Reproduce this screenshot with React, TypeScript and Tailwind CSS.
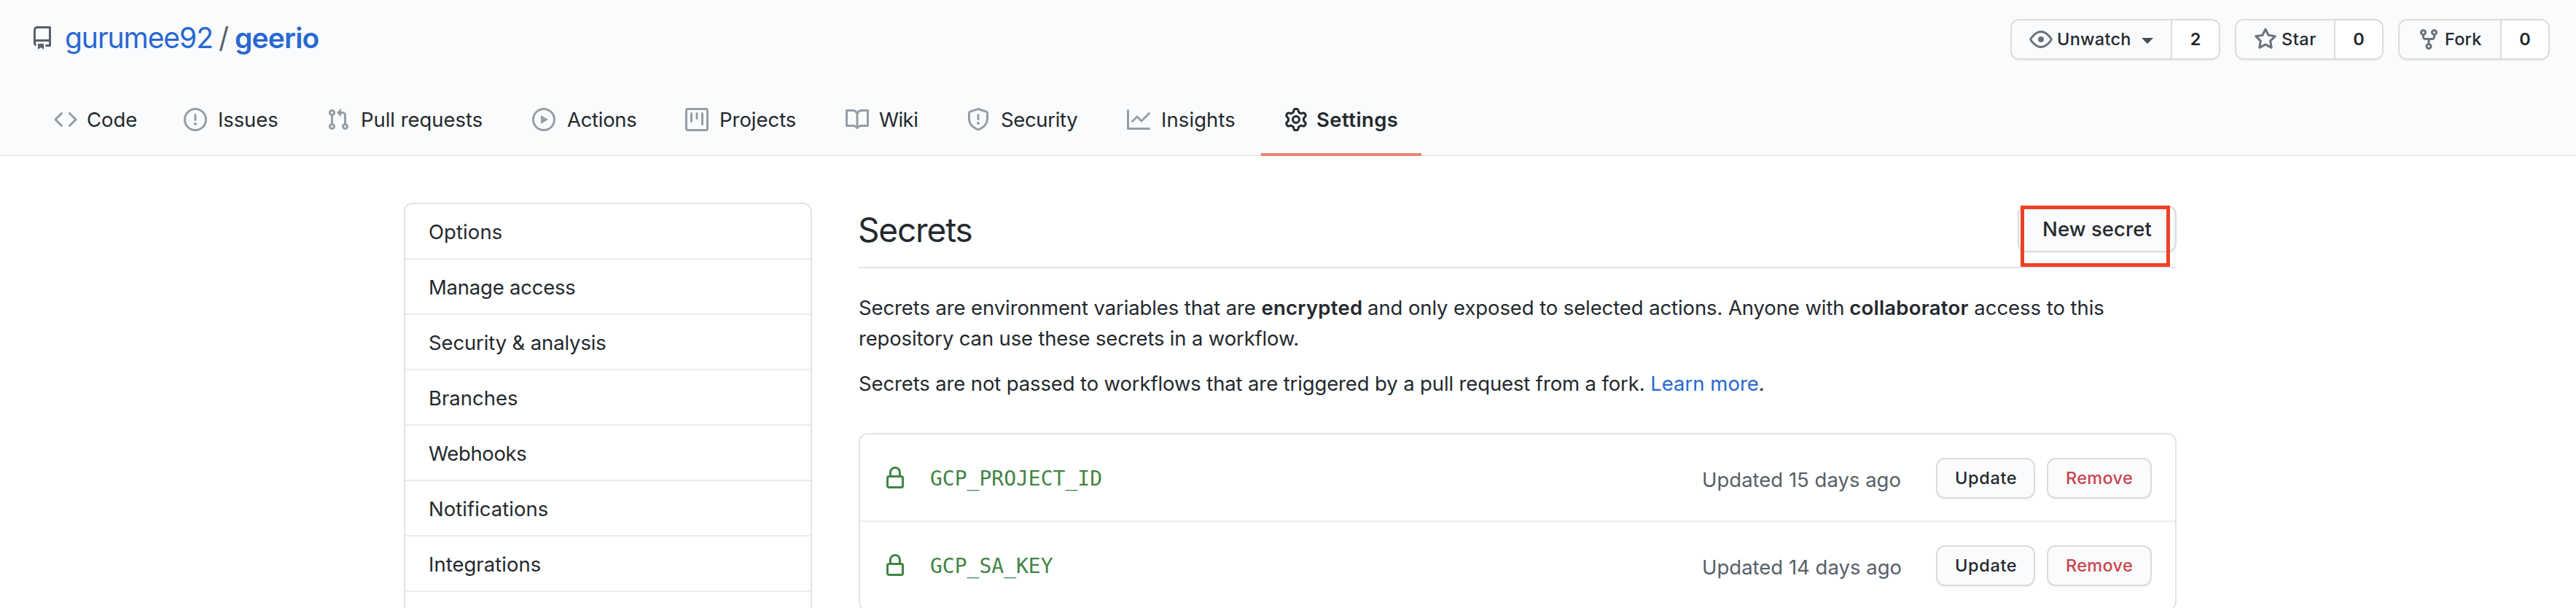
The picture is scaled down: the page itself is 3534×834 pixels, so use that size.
import type { ReactNode } from "react";
import clsx from "clsx";

const ICONS = {
  repo: "M2 2.5A2.5 2.5 0 014.5 0h8.75a.75.75 0 01.75.75v12.5a.75.75 0 01-.75.75h-2.5a.75.75 0 110-1.5h1.75v-2h-8a1 1 0 00-.714 1.7.75.75 0 01-1.072 1.05A2.495 2.495 0 012 11.5v-9zm10.5-1V9h-8c-.356 0-.694.074-1 .208V2.5a1 1 0 011-1h8zM5 12.25v3.25a.25.25 0 00.4.2l1.45-1.087a.25.25 0 01.3 0L8.6 15.7a.25.25 0 00.4-.2v-3.25a.25.25 0 00-.25-.25h-3.5a.25.25 0 00-.25.25z",
  code: "M4.72 3.22a.75.75 0 011.06 1.06L2.06 8l3.72 3.72a.75.75 0 11-1.06 1.06L.47 8.53a.75.75 0 010-1.06l4.25-4.25zm6.56 0a.75.75 0 10-1.06 1.06L13.94 8l-3.72 3.72a.75.75 0 101.06 1.06l4.25-4.25a.75.75 0 000-1.06l-4.25-4.25z",
  issue: "M8 1.5a6.5 6.5 0 100 13 6.5 6.5 0 000-13zM0 8a8 8 0 1116 0A8 8 0 010 8zm9 3a1 1 0 11-2 0 1 1 0 012 0zm-.25-6.25a.75.75 0 00-1.5 0v3.5a.75.75 0 001.5 0v-3.5z",
  pull: "M7.177 3.073L9.573.677A.25.25 0 0110 .854v4.792a.25.25 0 01-.427.177L7.177 3.427a.25.25 0 010-.354zM3.75 2.5a.75.75 0 100 1.5.75.75 0 000-1.5zm-2.25.75a2.25 2.25 0 113 2.122v5.256a2.251 2.251 0 11-1.5 0V5.372A2.25 2.25 0 011.5 3.25zM11 2.5h-1V4h1a1 1 0 011 1v5.628a2.251 2.251 0 101.5 0V5A2.5 2.5 0 0011 2.5zm1 10.25a.75.75 0 111.5 0 .75.75 0 01-1.5 0zM3.75 12a.75.75 0 100 1.5.75.75 0 000-1.5z",
  play: "M1.5 8a6.5 6.5 0 1113 0 6.5 6.5 0 01-13 0zM8 0a8 8 0 100 16A8 8 0 008 0zM6.379 5.227A.25.25 0 006 5.442v5.117a.25.25 0 00.379.214l4.264-2.559a.25.25 0 000-.428L6.379 5.227z",
  project: "M1.75 0A1.75 1.75 0 000 1.75v12.5C0 15.216.784 16 1.75 16h12.5A1.75 1.75 0 0016 14.25V1.75A1.75 1.75 0 0014.25 0H1.75zM1.5 1.75a.25.25 0 01.25-.25h12.5a.25.25 0 01.25.25v12.5a.25.25 0 01-.25.25H1.75a.25.25 0 01-.25-.25V1.75zM11.75 3a.75.75 0 00-.75.75v7.5a.75.75 0 001.5 0v-7.5a.75.75 0 00-.75-.75zm-8.25.75a.75.75 0 011.5 0v5.5a.75.75 0 01-1.5 0v-5.5zM8 3a.75.75 0 00-.75.75v3.5a.75.75 0 001.5 0v-3.5A.75.75 0 008 3z",
  book: "M0 1.75A.75.75 0 01.75 1h4.253c1.227 0 2.317.59 3 1.501A3.744 3.744 0 0111.006 1h4.245a.75.75 0 01.75.75v10.5a.75.75 0 01-.75.75h-4.507a2.25 2.25 0 00-1.591.659l-.622.621a.75.75 0 01-1.06 0l-.622-.621A2.25 2.25 0 005.258 13H.75a.75.75 0 01-.75-.75V1.75zm8.755 3a2.25 2.25 0 012.25-2.25H14.5v9h-3.757c-.71 0-1.4.201-1.992.572l.004-7.322zm-1.504 7.324l.004-5.073-.002-2.253A2.25 2.25 0 005.003 2.5H1.5v9h3.757a3.75 3.75 0 011.994.574z",
  shield: "M7.467.133a1.75 1.75 0 011.066 0l5.25 1.68A1.75 1.75 0 0115 3.48V7c0 1.566-.32 3.182-1.303 4.682-.983 1.498-2.585 2.813-5.032 3.855a1.7 1.7 0 01-1.33 0c-2.447-1.042-4.049-2.357-5.032-3.855C1.32 10.182 1 8.566 1 7V3.48a1.75 1.75 0 011.217-1.667l5.25-1.68zm.61 1.429a.25.25 0 00-.153 0l-5.25 1.68a.25.25 0 00-.174.238V7c0 1.358.275 2.666 1.057 3.86.784 1.194 2.121 2.34 4.366 3.297a.2.2 0 00.154 0c2.245-.956 3.582-2.104 4.366-3.298C13.225 9.666 13.5 8.36 13.5 7V3.48a.25.25 0 00-.174-.237l-5.25-1.68zM9 10.5a1 1 0 11-2 0 1 1 0 012 0zm-.25-5.75a.75.75 0 10-1.5 0v3a.75.75 0 001.5 0v-3z",
  graph: "M1.5 1.75a.75.75 0 00-1.5 0v12.5c0 .414.336.75.75.75h14.5a.75.75 0 000-1.5H1.5V1.75zm14.28 2.53a.75.75 0 00-1.06-1.06L10 7.94 7.53 5.47a.75.75 0 00-1.06 0L3.22 8.72a.75.75 0 001.06 1.06L7 7.06l2.47 2.47a.75.75 0 001.06 0l5.25-5.25z",
  gear: "M7.429 1.525a6.593 6.593 0 011.142 0c.036.003.108.036.137.146l.289 1.105c.147.56.55.967.997 1.189.174.086.341.183.501.29.417.278.97.423 1.53.27l1.102-.303c.11-.03.175.016.195.046.219.31.41.641.573.989.014.031.022.11-.059.19l-.815.806c-.411.406-.562.957-.53 1.456a4.588 4.588 0 010 .582c-.032.499.119 1.05.53 1.456l.815.806c.08.08.073.159.059.19a6.494 6.494 0 01-.573.99c-.02.029-.086.074-.195.045l-1.103-.303c-.559-.153-1.112-.008-1.529.27-.16.107-.327.204-.5.29-.449.222-.851.628-.998 1.189l-.289 1.105c-.029.11-.101.143-.137.146a6.613 6.613 0 01-1.142 0c-.036-.003-.108-.037-.137-.146l-.289-1.105c-.147-.56-.55-.967-.997-1.189a4.502 4.502 0 01-.501-.29c-.417-.278-.97-.423-1.53-.27l-1.102.303c-.11.03-.175-.016-.195-.046a6.492 6.492 0 01-.573-.989c-.014-.031-.022-.11.059-.19l.815-.806c.411-.406.562-.957.53-1.456a4.587 4.587 0 010-.582c.032-.499-.119-1.05-.53-1.456l-.815-.806c-.08-.08-.073-.159-.059-.19a6.44 6.44 0 01.573-.99c.02-.029.086-.075.195-.045l1.103.303c.559.153 1.112.008 1.529-.27.16-.107.327-.204.5-.29.449-.222.851-.628.998-1.189l.289-1.105c.029-.11.101-.143.137-.146zM8 0c-.236 0-.47.01-.701.03-.743.065-1.29.615-1.458 1.261l-.29 1.106c-.017.066-.078.158-.211.224a5.994 5.994 0 00-.668.386c-.123.082-.233.09-.3.071L3.27 2.776c-.644-.177-1.392.02-1.82.63a7.977 7.977 0 00-.704 1.217c-.315.675-.111 1.422.363 1.891l.815.806c.05.048.098.147.088.294a6.084 6.084 0 000 .772c.01.147-.038.246-.088.294l-.815.806c-.474.469-.678 1.216-.363 1.891.2.428.436.835.704 1.218.428.609 1.176.806 1.82.63l1.103-.303c.066-.019.176-.011.299.071.213.143.436.272.668.386.133.066.194.158.212.224l.289 1.106c.169.646.715 1.196 1.458 1.26a8.094 8.094 0 001.402 0c.743-.064 1.29-.614 1.458-1.26l.29-1.106c.017-.066.078-.158.211-.224a5.98 5.98 0 00.668-.386c.123-.082.233-.09.3-.071l1.102.302c.644.177 1.392-.02 1.82-.63.268-.382.505-.789.704-1.217.315-.675.111-1.422-.364-1.891l-.814-.806c-.05-.048-.098-.147-.088-.294a6.1 6.1 0 000-.772c-.01-.147.039-.246.088-.294l.814-.806c.475-.469.679-1.216.364-1.891a7.992 7.992 0 00-.704-1.218c-.428-.609-1.176-.806-1.82-.63l-1.103.303c-.066.019-.176.011-.299-.071a5.991 5.991 0 00-.668-.386c-.133-.066-.194-.158-.212-.224L10.16 1.29C9.99.645 9.444.095 8.701.031A8.094 8.094 0 008 0zm1.5 8a1.5 1.5 0 11-3 0 1.5 1.5 0 013 0zM11 8a3 3 0 11-6 0 3 3 0 016 0z",
  eye: "M1.679 7.932c.412-.621 1.242-1.75 2.366-2.717C5.175 4.242 6.527 3.5 8 3.5c1.473 0 2.824.742 3.955 1.715 1.124.967 1.954 2.096 2.366 2.717a.119.119 0 010 .136c-.412.621-1.242 1.75-2.366 2.717C10.825 11.758 9.473 12.5 8 12.5c-1.473 0-2.824-.742-3.955-1.715C2.92 9.818 2.09 8.69 1.679 8.068a.119.119 0 010-.136zM8 2c-1.981 0-3.67.992-4.933 2.078C1.797 5.169.88 6.423.43 7.1a1.619 1.619 0 000 1.798c.45.678 1.367 1.932 2.637 3.024C4.329 13.008 6.019 14 8 14c1.981 0 3.67-.992 4.933-2.078 1.27-1.091 2.187-2.345 2.637-3.023a1.619 1.619 0 000-1.798c-.45-.678-1.367-1.932-2.637-3.023C11.671 2.992 9.981 2 8 2zm0 8a2 2 0 100-4 2 2 0 000 4z",
  star: "M8 .25a.75.75 0 01.673.418l1.882 3.815 4.21.612a.75.75 0 01.416 1.279l-3.046 2.97.719 4.192a.75.75 0 01-1.088.791L8 12.347l-3.766 1.98a.75.75 0 01-1.088-.79l.72-4.194L.818 6.374a.75.75 0 01.416-1.28l4.21-.611L7.327.668A.75.75 0 018 .25zm0 2.445L6.615 5.5a.75.75 0 01-.564.41l-3.097.45 2.24 2.184a.75.75 0 01.216.664l-.528 3.084 2.769-1.456a.75.75 0 01.698 0l2.77 1.456-.53-3.084a.75.75 0 01.216-.664l2.24-2.183-3.096-.45a.75.75 0 01-.564-.41L8 2.694v.001z",
  fork: "M5 3.25a.75.75 0 11-1.5 0 .75.75 0 011.5 0zm0 2.122a2.25 2.25 0 10-1.5 0v.878A2.25 2.25 0 005.75 8.5h1.5v2.128a2.251 2.251 0 101.5 0V8.5h1.5a2.25 2.25 0 002.25-2.25v-.878a2.25 2.25 0 10-1.5 0v.878a.75.75 0 01-.75.75h-4.5A.75.75 0 015 6.25v-.878zm3.75 7.378a.75.75 0 11-1.5 0 .75.75 0 011.5 0zm3-8.75a.75.75 0 100-1.5.75.75 0 000 1.5z",
  lock: "M4 4v2h-.25A1.75 1.75 0 002 7.75v5.5c0 .966.784 1.75 1.75 1.75h8.5A1.75 1.75 0 0014 13.25v-5.5A1.75 1.75 0 0012.25 6H12V4a4 4 0 10-8 0zm6.5 2V4a2.5 2.5 0 10-5 0v2h5zM12 7.5h.25a.25.25 0 01.25.25v5.5a.25.25 0 01-.25.25h-8.5a.25.25 0 01-.25-.25v-5.5a.25.25 0 01.25-.25H12z",
};

function Icon({ name, className }: { name: keyof typeof ICONS; className?: string }) {
  return (
    <svg viewBox="0 0 16 16" fill="currentColor" fillRule="evenodd" className={clsx("size-8 shrink-0", className)} aria-hidden>
      <path fillRule="evenodd" d={ICONS[name]} />
    </svg>
  );
}

const TABS: { icon: keyof typeof ICONS; label: string; box: string; text: string; active?: boolean }[] = [
  { icon: "code", label: "Code", box: "w-[178px] gap-[13px]", text: "tracking-[-0.06px]" },
  { icon: "issue", label: "Issues", box: "w-[196px] gap-[15px]", text: "tracking-[-0.1px]" },
  { icon: "pull", label: "Pull requests", box: "w-[282px] gap-[15px]", text: "tracking-[-0.04px]" },
  { icon: "play", label: "Actions", box: "w-[210px] gap-4", text: "tracking-[-0.3px]" },
  { icon: "project", label: "Projects", box: "w-[220px] gap-[15px]", text: "tracking-[-0.03px]" },
  { icon: "book", label: "Wiki", box: "w-[166px] gap-[14px]", text: "tracking-[-0.57px]" },
  { icon: "shield", label: "Security", box: "w-[220px] gap-[15px]", text: "tracking-[-0.34px]" },
  { icon: "graph", label: "Insights", box: "w-[216px] gap-[15px]", text: "tracking-[0.09px]" },
  { icon: "gear", label: "Settings", box: "w-[220px] gap-3", text: "tracking-[0.42px]", active: true },
];

const MENU = [
  { label: "Options", text: "tracking-[0.08px]" },
  { label: "Manage access", text: "tracking-[-0.23px]" },
  { label: "Security & analysis", text: "tracking-[-0.14px]" },
  { label: "Branches", text: "" },
  { label: "Webhooks", text: "tracking-[-0.37px]" },
  { label: "Notifications", text: "tracking-[0.02px]" },
  { label: "Integrations", text: "tracking-[0.02px]" },
  { label: "", text: "" },
];

const SECRETS = [
  { name: "GCP_PROJECT_ID", updated: "Updated 15 days ago" },
  { name: "GCP_SA_KEY", updated: "Updated 14 days ago" },
];

const shadow = "shadow-[0_2px_0_rgba(27,31,35,0.04)]";

function SocialButton({ count, className, children }: { count: number; className: string; children: ReactNode }) {
  return (
    <div className={clsx("flex h-14 overflow-hidden rounded-xl border-2 border-[#dadbdd] text-[23.5px] font-medium", shadow)}>
      <button className={clsx("flex items-center border-r-2 border-[#dadbdd] bg-[#fafbfc] pl-6", className)}>{children}</button>
      <span className="flex w-16 items-center justify-center bg-white pb-px font-semibold">{count}</span>
    </div>
  );
}

function SmallButton({ className, children }: { className: string; children: ReactNode }) {
  return (
    <button
      className={clsx(
        "flex h-14 items-center rounded-xl border-2 border-[#dadbdd] bg-[#fafbfc] pb-px pl-6 text-[23.5px] font-medium whitespace-nowrap",
        shadow,
        className,
      )}
    >
      {children}
    </button>
  );
}

export default function App() {
  return (
    <div className="h-[834px] w-[3534px] overflow-hidden bg-white font-[Inter,sans-serif] text-[27.5px] leading-[42px] text-[#24292e]">
      <header className="flex h-[214px] flex-col border-b-2 border-[#eaecef] bg-[#fafbfd]">
        <div className="flex h-[116px] items-start justify-between pt-[26px] pr-9 pl-[42px]">
          <div className="flex h-[52px] items-center text-[39px] leading-[51px]">
            <Icon name="repo" className="text-[#586069]" />
            <a className="ml-[15px] w-[211px] pb-px tracking-[-1.05px] text-[#2867d2]">gurumee92</a>
            <span className="w-[22px] pb-px text-[#586069]">/</span>
            <a className="pb-px font-semibold tracking-[-0.8px] text-[#2867d2]">geerio</a>
          </div>
          <div className="flex gap-5">
            <SocialButton count={2} className="w-[220px]">
              <Icon name="eye" className="text-[#6a737d]" />
              <span className="ml-1.5 w-[116px] pb-px text-left tracking-[0.27px]">Unwatch</span>
              <svg viewBox="0 0 16 8" className="mt-1 h-2 w-4 shrink-0 fill-[#4a4d50]" aria-hidden>
                <path d="M0 0h16L8 8z" />
              </svg>
            </SocialButton>
            <SocialButton count={0} className="w-[136px]">
              <Icon name="star" className="text-[#6a737d]" />
              <span className="ml-1.5 pb-px tracking-[0.5px]">Star</span>
            </SocialButton>
            <SocialButton count={0} className="w-[140px]">
              <Icon name="fork" className="text-[#6a737d]" />
              <span className="ml-1.5 pb-px tracking-[0.2px]">Fork</span>
            </SocialButton>
          </div>
        </div>
        <nav className="flex pl-[42px]">
          {TABS.map((tab) => (
            <a
              key={tab.label}
              className={clsx(
                "-mb-0.5 flex h-[98px] shrink-0 items-center border-b-4 pt-0.5 pl-8 whitespace-nowrap",
                tab.box,
                tab.active ? "border-[#ea8470] font-semibold" : "border-transparent",
              )}
            >
              <Icon name={tab.icon} className={tab.active ? "text-[#24292e]" : "text-[#959da5]"} />
              <span className={tab.text}>{tab.label}</span>
            </a>
          ))}
        </nav>
      </header>

      <div className="flex gap-16 pt-16 pl-[554px]">
        <aside className="w-[560px] shrink-0 self-start rounded-xl border-2 border-[#e1e4e8]">
          {MENU.map((item) => (
            <a key={item.label} className="flex h-[76px] items-center border-b-2 border-[#eaecef] pt-0.5 pl-8 last:border-b-0">
              <span className={item.text}>{item.label}</span>
            </a>
          ))}
        </aside>

        <main className="w-[1808px] shrink-0">
          <div className="flex h-[90px] items-start justify-between border-b-2 border-[#e1e4e8] pt-1">
            <h2 className="-ml-px pt-px text-[46px] leading-[64px] tracking-[-1.17px]">Secrets</h2>
            <div className="relative">
              <button
                className={clsx(
                  "flex h-16 w-[218px] items-center rounded-xl border-2 border-[#dadbdd] bg-[#fafbfc] pl-8 font-medium tracking-[0.08px] whitespace-nowrap",
                  shadow,
                )}
              >
                New secret
              </button>
              <div className="absolute top-0 left-1 h-[84px] w-[205px] border-5 border-[#ee4025]" />
            </div>
          </div>

          <p className="mt-[33px] whitespace-nowrap">
            <span className="tracking-[-0.11px]">Secrets are environment variables that are</span>{" "}
            <strong className="font-semibold tracking-[0.24px]">encrypted</strong>{" "}
            <span className="-ml-px tracking-[-0.104px]">and only exposed to selected actions. Anyone with</span>{" "}
            <strong className="-ml-px font-semibold tracking-[0.25px]">collaborator</strong>{" "}
            <span className="tracking-[-0.04px]">access to this</span>
            <br />
            <span className="tracking-[-0.165px]">repository can use these secrets in a workflow.</span>
          </p>
          <p className="mt-5 whitespace-nowrap">
            <span className="tracking-[-0.13px]">
              Secrets are not passed to workflows that are triggered by a pull request from a fork.
            </span>{" "}
            <a className="text-[#2867d2]">Learn more</a>.
          </p>

          <div className="mt-[47px] rounded-xl border-2 border-[#e1e4e8]">
            {SECRETS.map((secret) => (
              <div key={secret.name} className="flex h-[120px] items-start border-b-2 border-[#eaecef] pt-8 pr-8 pl-8">
                <Icon name="lock" className="mt-3 text-[#418544]" />
                <code className="ml-8 flex-1 pt-[8px] font-['DejaVu_Sans_Mono',monospace] text-[28px] leading-[41px] text-[#418544]">
                  {secret.name}
                </code>
                <span className="w-[321px] pt-[9px] text-[#586069]">{secret.updated}</span>
                <SmallButton className="w-[136px] tracking-[0.65px]">Update</SmallButton>
                <SmallButton className="ml-4 w-36 tracking-[0.3px] text-[#c9444c]">Remove</SmallButton>
              </div>
            ))}
          </div>
        </main>
      </div>
    </div>
  );
}
